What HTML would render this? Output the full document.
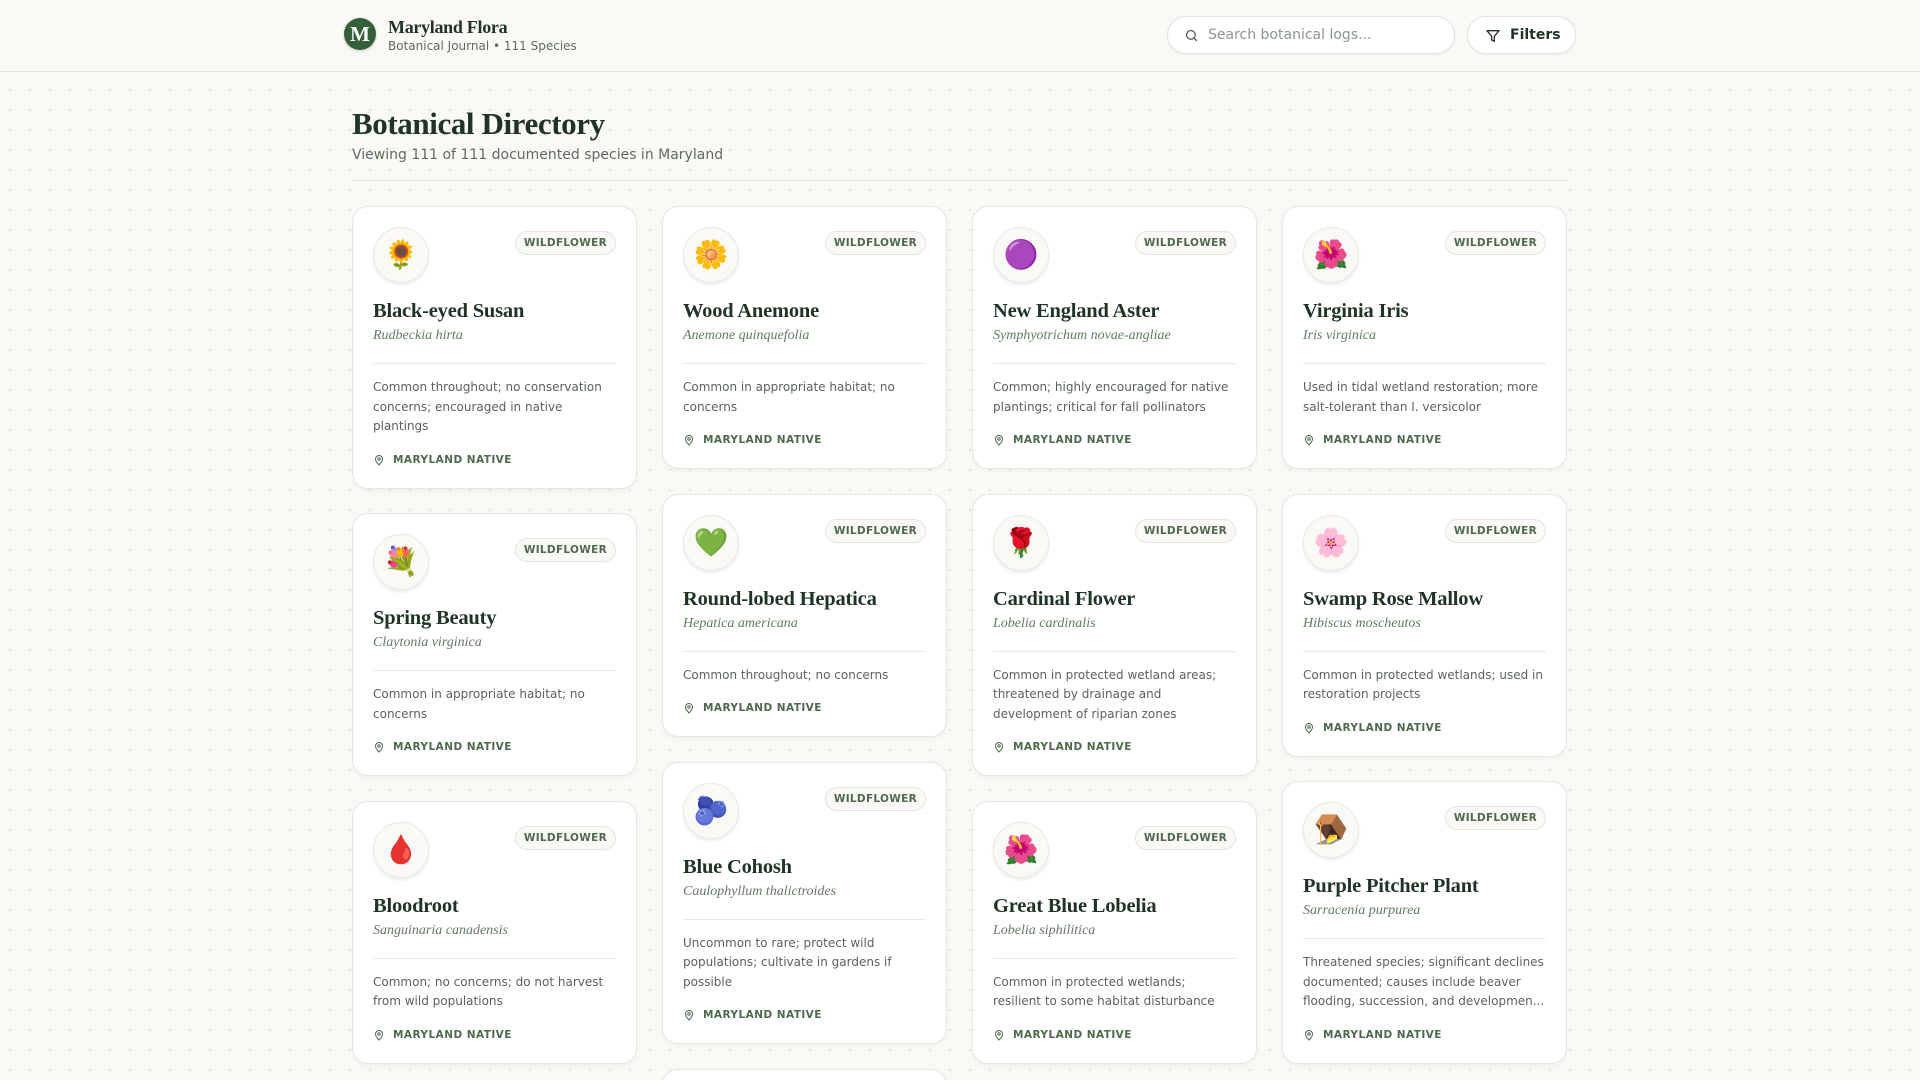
<!DOCTYPE html>
<html><head><meta charset="utf-8">
<style>
*{box-sizing:border-box;margin:0;padding:0}
html,body{width:1920px;height:1080px;overflow:hidden}
body{background-color:#faf9f5;background-image:radial-gradient(circle,#e6e3da 1.1px,transparent 1.3px);background-size:20px 20px;background-position:0 0;font-family:"DejaVu Sans","Liberation Sans",sans-serif;color:#333;position:relative}
header{height:72px;border-bottom:1px solid #e5e3dc;background:#faf9f5;position:relative}
.logo{position:absolute;left:344px;top:18px;width:32px;height:32px;border-radius:50%;background:#355e3b;color:#fff;font:bold 21px "Liberation Serif",serif;text-align:center;line-height:32px;box-shadow:0 1px 3px rgba(0,0,0,.2)}
.brand{position:absolute;left:388px;top:16px}
.brand h1{font:bold 18px "Liberation Serif",serif;color:#1f3424;letter-spacing:-.3px;line-height:22px}
.brand p{font-size:12px;color:#5b6e5b;margin-top:1px}
.search{position:absolute;left:1167px;top:16px;width:288px;height:38px;border:1px solid #e4e2db;border-radius:19px;background:#fff;box-shadow:0 1px 2px rgba(0,0,0,.05);font-size:14px;color:#8a978a;line-height:36px;padding-left:40px}
.search svg{position:absolute;left:16px;top:11px}
.filters{position:absolute;left:1467px;top:16px;width:109px;height:38px;border:1px solid #e4e2db;border-radius:19px;background:#fff;box-shadow:0 1px 2px rgba(0,0,0,.05);font-size:14px;font-weight:bold;color:#1f3424;line-height:36px;padding-left:42px}
.filters svg{position:absolute;left:17px;top:11px}
main{position:absolute;left:352px;top:72px;width:1216px;height:1008px;overflow:hidden}
.h2{font:bold 31px "Liberation Serif",serif;color:#1f3424;margin-top:33px;line-height:38px;letter-spacing:-.4px}
.sub{font-size:14px;color:#5b6e5b;margin-top:4px}
.rule{height:1px;background:#e2e0d8;margin-top:17px}
.grid{display:flex;gap:25px;margin-top:25px;align-items:flex-start}
.col{width:285px;display:flex;flex-direction:column;gap:24.5px}
.card{background:#fff;border:1px solid #e8e6df;border-radius:16px;box-shadow:0 2px 6px rgba(0,0,0,.04);padding:20px;position:relative}
.ic{width:56px;height:56px;border-radius:50%;background:#faf9f5;border:1px solid #ebe9e2;box-shadow:0 2px 3px rgba(0,0,0,.08);text-align:center;line-height:54px;font-size:28px;font-family:"Noto Color Emoji",sans-serif}
.badge{position:absolute;right:20px;top:24px;height:24px;border:1px solid #e6e4dc;background:#faf9f5;border-radius:12px;padding:0 8px;font-size:10.5px;font-weight:bold;letter-spacing:.3px;color:#4d6a4d;line-height:22px}
.name{font:bold 20.5px "Liberation Serif",serif;color:#1f3424;margin-top:14px;line-height:28px;letter-spacing:-.2px}
.lat{font:italic 14px "Liberation Serif",serif;color:#5f7c5f;line-height:20px;margin-top:1px}
.hr{height:1px;background:#ebe9e3;margin-top:17px}
.desc{font-size:12px;color:#5a635a;line-height:19.5px;margin-top:14px;white-space:nowrap}
.foot{margin-top:15px;height:16px;font-size:10.5px;font-weight:bold;letter-spacing:.45px;color:#4d6a4d;line-height:16px;padding-left:20px;position:relative}
.foot svg{position:absolute;left:0;top:2px}
</style></head><body>
<header>
<div class="logo">M</div>
<div class="brand"><h1>Maryland Flora</h1><p>Botanical Journal • 111 Species</p></div>
<div class="search"><svg width="15" height="15" viewBox="0 0 24 24" fill="none" stroke="#555" stroke-width="2" stroke-linecap="round"><circle cx="11" cy="11" r="7"/><path d="M20 20l-4-4"/></svg>Search botanical logs...</div>
<div class="filters"><svg width="16" height="16" viewBox="0 0 24 24" fill="none" stroke="#1f3424" stroke-width="2" stroke-linejoin="round"><path d="M3 4h18l-7 8.5V20l-4-2v-5.5z"/></svg>Filters</div>
</header>
<main>
<div class="h2">Botanical Directory</div>
<div class="sub">Viewing 111 of 111 documented species in Maryland</div>
<div class="rule"></div>
<div class="grid">
<div class="col">
<div class="card"><div class="ic">🌻</div><div class="badge">WILDFLOWER</div><div class="name">Black-eyed Susan</div><div class="lat">Rudbeckia hirta</div><div class="hr"></div><div class="desc">Common throughout; no conservation<br>concerns; encouraged in native<br>plantings</div><div class="foot"><svg width="12" height="12" viewBox="0 0 24 24" fill="none" stroke="#4d6a4d" stroke-width="2"><path d="M12 22s7-7 7-12a7 7 0 0 0-14 0c0 5 7 12 7 12z"/><circle cx="12" cy="10" r="2.5"/></svg>MARYLAND NATIVE</div></div>
<div class="card"><div class="ic">💐</div><div class="badge">WILDFLOWER</div><div class="name">Spring Beauty</div><div class="lat">Claytonia virginica</div><div class="hr"></div><div class="desc">Common in appropriate habitat; no<br>concerns</div><div class="foot"><svg width="12" height="12" viewBox="0 0 24 24" fill="none" stroke="#4d6a4d" stroke-width="2"><path d="M12 22s7-7 7-12a7 7 0 0 0-14 0c0 5 7 12 7 12z"/><circle cx="12" cy="10" r="2.5"/></svg>MARYLAND NATIVE</div></div>
<div class="card"><div class="ic">🩸</div><div class="badge">WILDFLOWER</div><div class="name">Bloodroot</div><div class="lat">Sanguinaria canadensis</div><div class="hr"></div><div class="desc">Common; no concerns; do not harvest<br>from wild populations</div><div class="foot"><svg width="12" height="12" viewBox="0 0 24 24" fill="none" stroke="#4d6a4d" stroke-width="2"><path d="M12 22s7-7 7-12a7 7 0 0 0-14 0c0 5 7 12 7 12z"/><circle cx="12" cy="10" r="2.5"/></svg>MARYLAND NATIVE</div></div>
</div>
<div class="col">
<div class="card"><div class="ic">🌼</div><div class="badge">WILDFLOWER</div><div class="name">Wood Anemone</div><div class="lat">Anemone quinquefolia</div><div class="hr"></div><div class="desc">Common in appropriate habitat; no<br>concerns</div><div class="foot"><svg width="12" height="12" viewBox="0 0 24 24" fill="none" stroke="#4d6a4d" stroke-width="2"><path d="M12 22s7-7 7-12a7 7 0 0 0-14 0c0 5 7 12 7 12z"/><circle cx="12" cy="10" r="2.5"/></svg>MARYLAND NATIVE</div></div>
<div class="card"><div class="ic">💚</div><div class="badge">WILDFLOWER</div><div class="name">Round-lobed Hepatica</div><div class="lat">Hepatica americana</div><div class="hr"></div><div class="desc">Common throughout; no concerns</div><div class="foot"><svg width="12" height="12" viewBox="0 0 24 24" fill="none" stroke="#4d6a4d" stroke-width="2"><path d="M12 22s7-7 7-12a7 7 0 0 0-14 0c0 5 7 12 7 12z"/><circle cx="12" cy="10" r="2.5"/></svg>MARYLAND NATIVE</div></div>
<div class="card"><div class="ic">🫐</div><div class="badge">WILDFLOWER</div><div class="name">Blue Cohosh</div><div class="lat">Caulophyllum thalictroides</div><div class="hr"></div><div class="desc">Uncommon to rare; protect wild<br>populations; cultivate in gardens if<br>possible</div><div class="foot"><svg width="12" height="12" viewBox="0 0 24 24" fill="none" stroke="#4d6a4d" stroke-width="2"><path d="M12 22s7-7 7-12a7 7 0 0 0-14 0c0 5 7 12 7 12z"/><circle cx="12" cy="10" r="2.5"/></svg>MARYLAND NATIVE</div></div>
<div class="card" style="height:60px"></div>
</div>
<div class="col">
<div class="card"><div class="ic">🟣</div><div class="badge">WILDFLOWER</div><div class="name">New England Aster</div><div class="lat">Symphyotrichum novae-angliae</div><div class="hr"></div><div class="desc">Common; highly encouraged for native<br>plantings; critical for fall pollinators</div><div class="foot"><svg width="12" height="12" viewBox="0 0 24 24" fill="none" stroke="#4d6a4d" stroke-width="2"><path d="M12 22s7-7 7-12a7 7 0 0 0-14 0c0 5 7 12 7 12z"/><circle cx="12" cy="10" r="2.5"/></svg>MARYLAND NATIVE</div></div>
<div class="card"><div class="ic">🌹</div><div class="badge">WILDFLOWER</div><div class="name">Cardinal Flower</div><div class="lat">Lobelia cardinalis</div><div class="hr"></div><div class="desc">Common in protected wetland areas;<br>threatened by drainage and<br>development of riparian zones</div><div class="foot"><svg width="12" height="12" viewBox="0 0 24 24" fill="none" stroke="#4d6a4d" stroke-width="2"><path d="M12 22s7-7 7-12a7 7 0 0 0-14 0c0 5 7 12 7 12z"/><circle cx="12" cy="10" r="2.5"/></svg>MARYLAND NATIVE</div></div>
<div class="card"><div class="ic">🌺</div><div class="badge">WILDFLOWER</div><div class="name">Great Blue Lobelia</div><div class="lat">Lobelia siphilitica</div><div class="hr"></div><div class="desc">Common in protected wetlands;<br>resilient to some habitat disturbance</div><div class="foot"><svg width="12" height="12" viewBox="0 0 24 24" fill="none" stroke="#4d6a4d" stroke-width="2"><path d="M12 22s7-7 7-12a7 7 0 0 0-14 0c0 5 7 12 7 12z"/><circle cx="12" cy="10" r="2.5"/></svg>MARYLAND NATIVE</div></div>
</div>
<div class="col">
<div class="card"><div class="ic">🌺</div><div class="badge">WILDFLOWER</div><div class="name">Virginia Iris</div><div class="lat">Iris virginica</div><div class="hr"></div><div class="desc">Used in tidal wetland restoration; more<br>salt-tolerant than I. versicolor</div><div class="foot"><svg width="12" height="12" viewBox="0 0 24 24" fill="none" stroke="#4d6a4d" stroke-width="2"><path d="M12 22s7-7 7-12a7 7 0 0 0-14 0c0 5 7 12 7 12z"/><circle cx="12" cy="10" r="2.5"/></svg>MARYLAND NATIVE</div></div>
<div class="card"><div class="ic">🌸</div><div class="badge">WILDFLOWER</div><div class="name">Swamp Rose Mallow</div><div class="lat">Hibiscus moscheutos</div><div class="hr"></div><div class="desc">Common in protected wetlands; used in<br>restoration projects</div><div class="foot"><svg width="12" height="12" viewBox="0 0 24 24" fill="none" stroke="#4d6a4d" stroke-width="2"><path d="M12 22s7-7 7-12a7 7 0 0 0-14 0c0 5 7 12 7 12z"/><circle cx="12" cy="10" r="2.5"/></svg>MARYLAND NATIVE</div></div>
<div class="card"><div class="ic">🪤</div><div class="badge">WILDFLOWER</div><div class="name">Purple Pitcher Plant</div><div class="lat">Sarracenia purpurea</div><div class="hr"></div><div class="desc">Threatened species; significant declines<br>documented; causes include beaver<br>flooding, succession, and developmen...</div><div class="foot"><svg width="12" height="12" viewBox="0 0 24 24" fill="none" stroke="#4d6a4d" stroke-width="2"><path d="M12 22s7-7 7-12a7 7 0 0 0-14 0c0 5 7 12 7 12z"/><circle cx="12" cy="10" r="2.5"/></svg>MARYLAND NATIVE</div></div>
</div>
</div>
</main>
</body></html>
